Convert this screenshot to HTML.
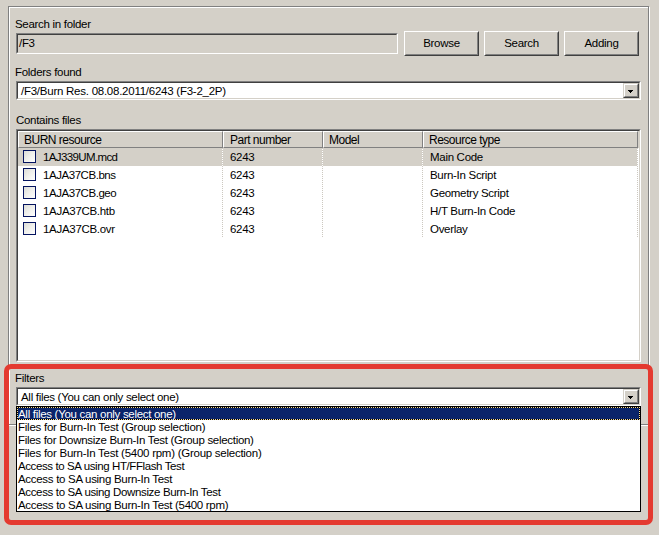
<!DOCTYPE html>
<html><head><meta charset="utf-8">
<style>
html,body{margin:0;padding:0;}
body{width:659px;height:535px;overflow:hidden;background:#D4D0C8;position:relative;font-family:"Liberation Sans",sans-serif;}
div{box-sizing:border-box;}
.a{position:absolute;}
.t{position:absolute;font-size:11.5px;line-height:13px;white-space:nowrap;color:#000;letter-spacing:-0.3px;margin-left:-1px;margin-top:1px;}
.sunk{position:absolute;border:1px solid;border-color:#808080 #fff #fff #808080;}
.sunk>.in{position:absolute;left:0;top:0;right:0;bottom:0;border:1px solid;border-color:#404040 #D4D0C8 #D4D0C8 #404040;}
.btn{position:absolute;border:1px solid;border-color:#fff #404040 #404040 #fff;background:#D4D0C8;}
.btn>.in{position:absolute;left:0;top:0;right:0;bottom:0;border:1px solid;border-color:#D4D0C8 #808080 #808080 #D4D0C8;}
.dd{position:absolute;border:1px solid;border-color:#D4D0C8 #404040 #404040 #D4D0C8;background:#D4D0C8;}
.dd>.in{position:absolute;left:0;top:0;right:0;bottom:0;border:1px solid;border-color:#fff #808080 #808080 #fff;}
.arrow{position:absolute;width:0;height:0;border-left:2.5px solid transparent;border-right:2.5px solid transparent;border-top:3px solid #000;}
.cb{position:absolute;left:23px;width:13px;height:13px;border:1px solid #04135F;background:linear-gradient(135deg,#DCDCD7 0%,#EEEEEA 45%,#FFFFFF 100%);}
.cb>.in{display:none;}
.vd{position:absolute;width:1px;background:repeating-linear-gradient(to bottom,#CCC8C0 0,#CCC8C0 1px,#fff 1px,#fff 2px);}
</style></head><body>

<!-- etched outer frame -->
<div class="a" style="left:9px;top:7px;width:641px;height:419px;border:1px solid #fff;"></div>
<div class="a" style="left:8px;top:6px;width:641px;height:419px;border:1px solid #808080;"></div>

<!-- Search in folder -->
<div class="t" style="left:16px;top:17px;">Search in folder</div>
<div class="sunk" style="left:16px;top:33px;width:382px;height:21px;background:#D4D0C8;"><div class="in"></div></div>
<div class="t" style="left:20px;top:36px;">/F3</div>

<div class="btn" style="left:404px;top:31px;width:75px;height:25px;"><div class="in"></div></div>
<div class="t" style="left:405px;top:36px;width:75px;text-align:center;">Browse</div>
<div class="btn" style="left:484px;top:31px;width:75px;height:25px;"><div class="in"></div></div>
<div class="t" style="left:485px;top:36px;width:75px;text-align:center;">Search</div>
<div class="btn" style="left:564px;top:31px;width:75px;height:25px;"><div class="in"></div></div>
<div class="t" style="left:565px;top:36px;width:75px;text-align:center;">Adding</div>

<!-- Folders found -->
<div class="t" style="left:16px;top:65px;">Folders found</div>
<div class="sunk" style="left:16px;top:81px;width:625px;height:19px;background:#fff;"><div class="in"></div></div>
<div class="t" style="left:22px;top:84px;letter-spacing:-0.25px;">/F3/Burn Res. 08.08.2011/6243 (F3-2_2P)</div>
<div class="dd" style="left:623px;top:83px;width:16px;height:15px;"><div class="in"></div></div>
<div class="a" style="left:628px;top:90px;width:5px;height:1px;background:#000;"></div><div class="a" style="left:629px;top:91px;width:3px;height:1px;background:#000;"></div><div class="a" style="left:630px;top:92px;width:1px;height:1px;background:#000;"></div>

<!-- Contains files -->
<div class="t" style="left:17px;top:113px;">Contains files</div>
<div class="sunk" style="left:16px;top:129px;width:625px;height:233px;background:#fff;"><div class="in"></div></div>
<!-- header -->
<div class="a" style="left:18px;top:131px;width:621px;height:17px;background:#D4D0C8;"></div>
<div class="a" style="left:18px;top:131px;width:205px;height:17px;border-top:1px solid #fff;border-left:1px solid #fff;border-right:1px solid #808080;border-bottom:1px solid #808080;"></div>
<div class="a" style="left:223px;top:131px;width:100px;height:17px;border-top:1px solid #fff;border-left:1px solid #fff;border-right:1px solid #808080;border-bottom:1px solid #808080;"></div>
<div class="a" style="left:323px;top:131px;width:100px;height:17px;border-top:1px solid #fff;border-left:1px solid #fff;border-right:1px solid #808080;border-bottom:1px solid #808080;"></div>
<div class="a" style="left:423px;top:131px;width:215px;height:17px;border-top:1px solid #fff;border-left:1px solid #fff;border-right:1px solid #808080;border-bottom:1px solid #808080;"></div>
<div class="t" style="left:25px;top:133px;font-size:12px;letter-spacing:-0.5px;">BURN resource</div>
<div class="t" style="left:231px;top:133px;font-size:12px;letter-spacing:-0.5px;">Part number</div>
<div class="t" style="left:330px;top:133px;font-size:12px;letter-spacing:-0.5px;">Model</div>
<div class="t" style="left:430px;top:133px;font-size:12px;letter-spacing:-0.5px;">Resource type</div>
<!-- rows -->
<div class="a" style="left:18px;top:148px;width:620px;height:18px;background:#D4D0C8;"></div>
<div class="vd" style="left:222px;top:148px;height:90px;"></div>
<div class="vd" style="left:322px;top:148px;height:90px;"></div>
<div class="vd" style="left:422px;top:148px;height:90px;"></div>
<div class="vd" style="left:637px;top:148px;height:90px;"></div>

<div class="cb" style="top:150px;"><div class="in"></div></div>
<div class="cb" style="top:168px;"><div class="in"></div></div>
<div class="cb" style="top:186px;"><div class="in"></div></div>
<div class="cb" style="top:204px;"><div class="in"></div></div>
<div class="cb" style="top:222px;"><div class="in"></div></div>

<div class="t" style="left:44px;top:150px;letter-spacing:-0.62px;">1AJ339UM.mcd</div>
<div class="t" style="left:231px;top:150px;">6243</div>
<div class="t" style="left:431px;top:150px;">Main Code</div>
<div class="t" style="left:44px;top:168px;letter-spacing:-0.45px;">1AJA37CB.bns</div>
<div class="t" style="left:231px;top:168px;">6243</div>
<div class="t" style="left:431px;top:168px;">Burn-In Script</div>
<div class="t" style="left:44px;top:186px;letter-spacing:-0.45px;">1AJA37CB.geo</div>
<div class="t" style="left:231px;top:186px;">6243</div>
<div class="t" style="left:431px;top:186px;">Geometry Script</div>
<div class="t" style="left:44px;top:204px;">1AJA37CB.htb</div>
<div class="t" style="left:231px;top:204px;">6243</div>
<div class="t" style="left:431px;top:204px;">H/T Burn-In Code</div>
<div class="t" style="left:44px;top:222px;">1AJA37CB.ovr</div>
<div class="t" style="left:231px;top:222px;">6243</div>
<div class="t" style="left:431px;top:222px;">Overlay</div>

<!-- Filters -->
<div class="t" style="left:16px;top:371px;">Filters</div>
<div class="sunk" style="left:16px;top:387px;width:625px;height:19px;background:#fff;"><div class="in"></div></div>
<div class="t" style="left:22px;top:390px;">All files (You can only select one)</div>
<div class="dd" style="left:623px;top:389px;width:16px;height:15px;"><div class="in"></div></div>
<div class="a" style="left:628px;top:396px;width:5px;height:1px;background:#000;"></div><div class="a" style="left:629px;top:397px;width:3px;height:1px;background:#000;"></div><div class="a" style="left:630px;top:398px;width:1px;height:1px;background:#000;"></div>

<!-- dropdown list -->
<div class="a" style="left:16px;top:406px;width:625px;height:106px;background:#fff;border:1px solid #000;"></div>
<div class="a" style="left:17px;top:407px;width:623px;height:13px;background:#000;"></div><div class="a" style="left:17px;top:407px;width:623px;height:13px;background:#0A246A;background-clip:padding-box;border:1px dotted #F5DB95;"></div>
<div class="t" style="left:19px;top:407px;color:#fff;">All files (You can only select one)</div>
<div class="t" style="left:19px;top:420px;letter-spacing:-0.25px;">Files for Burn-In Test (Group selection)</div>
<div class="t" style="left:19px;top:433px;">Files for Downsize Burn-In Test (Group selection)</div>
<div class="t" style="left:19px;top:446px;letter-spacing:-0.26px;">Files for Burn-In Test (5400 rpm) (Group selection)</div>
<div class="t" style="left:19px;top:459px;letter-spacing:-0.4px;">Access to SA using HT/FFlash Test</div>
<div class="t" style="left:19px;top:472px;">Access to SA using Burn-In Test</div>
<div class="t" style="left:19px;top:485px;letter-spacing:-0.35px;">Access to SA using Downsize Burn-In Test</div>
<div class="t" style="left:19px;top:498px;">Access to SA using Burn-In Test (5400 rpm)</div>

<!-- red annotation -->
<div class="a" style="left:4px;top:364px;width:649px;height:161px;border:5px solid #E43A30;border-radius:7px;"></div>

</body></html>
